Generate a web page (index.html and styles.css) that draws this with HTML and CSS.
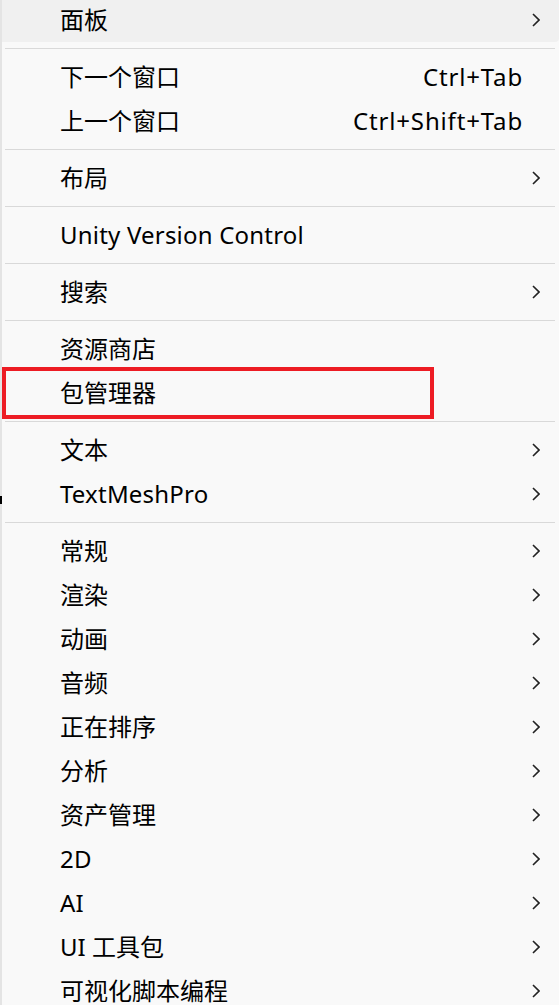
FILE: index.html
```html
<!DOCTYPE html>
<html lang="zh-CN">
<head>
<meta charset="utf-8">
<title>Window menu</title>
<link rel="stylesheet" href="styles.css">
</head>
<body>
<div class="menu">
  <div class="item hover"><span class="label">面板</span><svg class="chev" viewBox="0 0 8 14"><polyline points="1,1 7,7 1,13"/></svg></div>
  <div class="sep"></div>
  <div class="item"><span class="label">下一个窗口</span><span class="key">Ctrl+Tab</span></div>
  <div class="item"><span class="label">上一个窗口</span><span class="key">Ctrl+Shift+Tab</span></div>
  <div class="sep"></div>
  <div class="item"><span class="label">布局</span><svg class="chev" viewBox="0 0 8 14"><polyline points="1,1 7,7 1,13"/></svg></div>
  <div class="sep"></div>
  <div class="item"><span class="label latin">Unity Version Control</span></div>
  <div class="sep"></div>
  <div class="item"><span class="label">搜索</span><svg class="chev" viewBox="0 0 8 14"><polyline points="1,1 7,7 1,13"/></svg></div>
  <div class="sep"></div>
  <div class="item"><span class="label">资源商店</span></div>
  <div class="item"><span class="label">包管理器</span></div>
  <div class="sep"></div>
  <div class="item"><span class="label">文本</span><svg class="chev" viewBox="0 0 8 14"><polyline points="1,1 7,7 1,13"/></svg></div>
  <div class="item"><span class="label latin">TextMeshPro</span><svg class="chev" viewBox="0 0 8 14"><polyline points="1,1 7,7 1,13"/></svg></div>
  <div class="sep"></div>
  <div class="item"><span class="label">常规</span><svg class="chev" viewBox="0 0 8 14"><polyline points="1,1 7,7 1,13"/></svg></div>
  <div class="item"><span class="label">渲染</span><svg class="chev" viewBox="0 0 8 14"><polyline points="1,1 7,7 1,13"/></svg></div>
  <div class="item"><span class="label">动画</span><svg class="chev" viewBox="0 0 8 14"><polyline points="1,1 7,7 1,13"/></svg></div>
  <div class="item"><span class="label">音频</span><svg class="chev" viewBox="0 0 8 14"><polyline points="1,1 7,7 1,13"/></svg></div>
  <div class="item"><span class="label">正在排序</span><svg class="chev" viewBox="0 0 8 14"><polyline points="1,1 7,7 1,13"/></svg></div>
  <div class="item"><span class="label">分析</span><svg class="chev" viewBox="0 0 8 14"><polyline points="1,1 7,7 1,13"/></svg></div>
  <div class="item"><span class="label">资产管理</span><svg class="chev" viewBox="0 0 8 14"><polyline points="1,1 7,7 1,13"/></svg></div>
  <div class="item"><span class="label latin">2D</span><svg class="chev" viewBox="0 0 8 14"><polyline points="1,1 7,7 1,13"/></svg></div>
  <div class="item"><span class="label latin">AI</span><svg class="chev" viewBox="0 0 8 14"><polyline points="1,1 7,7 1,13"/></svg></div>
  <div class="item"><span class="label">UI 工具包</span><svg class="chev" viewBox="0 0 8 14"><polyline points="1,1 7,7 1,13"/></svg></div>
  <div class="item"><span class="label">可视化脚本编程</span><svg class="chev" viewBox="0 0 8 14"><polyline points="1,1 7,7 1,13"/></svg></div>
  <div class="highlight-box"></div>
  <div class="edge-mark"></div>
</div>
</body>
</html>
```
FILE: styles.css
```css
html, body {
  margin: 0;
  padding: 0;
  background: #f9f9f9;
  overflow: hidden;
}
.menu {
  position: relative;
  margin-top: -2px;
  border-left: 2px solid #e4e4e4;
  background: #f9f9f9;
  min-height: 1010px;
  font-family: "Noto Sans", "Noto Sans CJK SC", sans-serif;
  font-size: 24px;
  color: #000;
}
.item {
  height: 44px;
  box-sizing: border-box;
  display: flex;
  align-items: center;
  padding-left: 58px;
  padding-right: 19px;
}
.label, .key {
  line-height: 28px;
  padding-bottom: 1px;
  white-space: nowrap;
}
.label {
  flex: 1;
}
.label.latin {
  letter-spacing: 0.2px;
}
.item.hover {
  background: #f0f0f0;
  border-radius: 0 0 4px 0;
}
.key {
  margin-right: 17px;
  letter-spacing: 0.85px;
}
.chev {
  width: 8px;
  height: 14px;
  fill: none;
  stroke: #222;
  stroke-width: 1.6;
}
.sep {
  height: 1px;
  margin: 6px 4px 6px 3px;
  background: #d9d9d9;
}
.highlight-box {
  position: absolute;
  left: 0;
  top: 369px;
  width: 432px;
  height: 52px;
  box-sizing: border-box;
  border: 4px solid #ed1c24;
}
.edge-mark {
  position: absolute;
  left: -2px;
  top: 498px;
  width: 2px;
  height: 8px;
  background: #000;
}
```
